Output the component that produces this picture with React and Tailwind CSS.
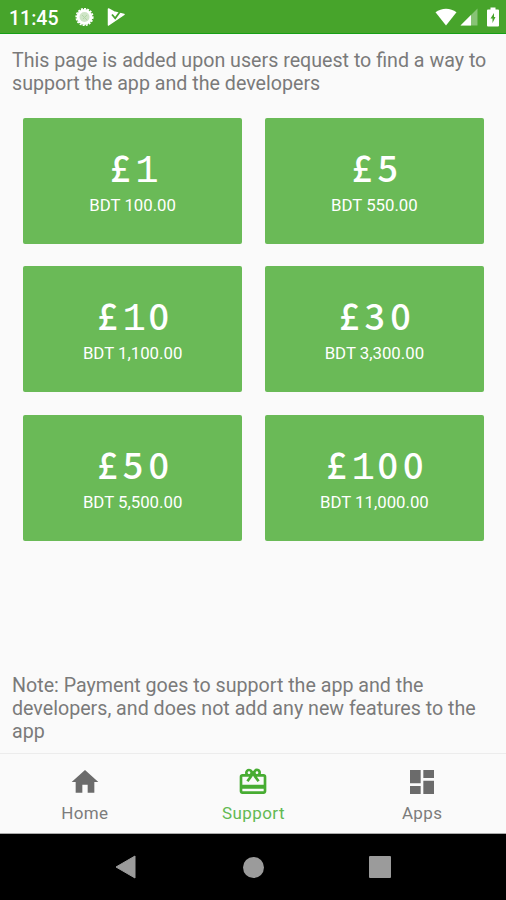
import { MdHome, MdRedeem, MdDashboard } from "react-icons/md";

const donations = [
  { amount: "£1", price: "BDT 100.00" },
  { amount: "£5", price: "BDT 550.00" },
  { amount: "£10", price: "BDT 1,100.00" },
  { amount: "£30", price: "BDT 3,300.00" },
  { amount: "£50", price: "BDT 5,500.00" },
  { amount: "£100", price: "BDT 11,000.00" },
];

const tabs = [
  { label: "Home", icon: MdHome },
  { label: "Support", icon: MdRedeem, active: true },
  { label: "Apps", icon: MdDashboard },
];

function StatusBar() {
  return (
    <header className="flex h-[34px] items-center border-b border-[#16a016] bg-[#47a42b] pl-[9px] pr-[7px] text-white">
      <span className="w-[66px] pt-[4px] text-[19.5px] font-medium leading-none">11:45</span>
      {/* Notification icons */}
      <svg className="mt-px h-5 w-5" viewBox="0 0 20 20">
        <circle cx="9.5" cy="10" r="8.3" fill="none" stroke="#fff" strokeWidth="1.6" strokeDasharray="2 1.2" />
        <circle cx="9.5" cy="10" r="7.9" fill="#fff" />
        <circle cx="9.5" cy="10" r="5" fill="#cfe5c7" />
        <path d="M7 8l5 5M8 12l4-4" stroke="#b3d6a7" strokeWidth="1" />
      </svg>
      <svg className="ml-3 mt-px h-5 w-[18px]" viewBox="0 0 18 20">
        <path d="M1.500 2L7 5L11 6L17 7.500L1.500 18Z" fill="#fff" stroke="#fff" strokeWidth="1.5" strokeLinejoin="round" />
        <path d="M5 7.500l3.200 3.800L13.500 4" fill="none" stroke="#47a42b" strokeWidth="1.8" />
      </svg>

      <div className="ml-auto mt-px flex items-center">
        <svg className="h-[18px] w-[22px]" viewBox="0 0 22 18">
          <path d="M11 17.5L.5 4.2C6.5-.5 15.500-.5 21.500 4.200Z" fill="#fff" />
        </svg>
        <svg className="ml-[3px] h-[18px] w-[18px]" viewBox="0 0 18 18">
          <path d="M17.500 .5v17H.5Z" fill="#fff" fillOpacity=".35" />
          <path d="M11 7v10.500H.5Z" fill="#fff" />
        </svg>
        <svg className="ml-[9px] h-5 w-3" viewBox="0 0 12 20">
          <path d="M3.500 .5h5v2H11q1 0 1 1V18.500q0 1-1 1H1q-1 0-1-1V3.500q0-1 1-1h2.500Z" fill="#fff" />
          <path d="M7 6L3.500 11.500H5.500V16L8.500 10H7Z" fill="#47a42b" />
        </svg>
      </div>
    </header>
  );
}

function Amount({ value }) {
  return (
    <span className="flex h-10 items-baseline pl-px leading-[40px]">
      {value.split("").map((char, i) => (
        <span
          key={i}
          className={
            char === "1"
              ? "w-[25.6px] pl-[2px] text-center font-['Liberation_Mono',monospace] text-[39px]"
              : "w-[25.6px] text-center font-['Noto_Sans_CJK_JP',sans-serif] text-[36px] font-medium"
          }
        >
          {char}
        </span>
      ))}
    </span>
  );
}

function DonationCard({ amount, price }) {
  return (
    <button className="flex h-[126px] flex-col items-center rounded-xs bg-[#6aba57] pt-[28px] text-white">
      <Amount value={amount} />
      <span className="mt-[9px] text-[16.800px] leading-5">{price}</span>
    </button>
  );
}

export default function App() {
  return (
    <div className="flex h-[900px] w-[506px] flex-col overflow-hidden bg-[#fafafa] font-[Roboto,sans-serif]">
      <StatusBar />

      <main className="flex flex-1 flex-col">
        <p className="px-3 pt-[15px] text-[19.650px] leading-[23px] text-[#7a7a7a]">
          This page is added upon users request to find a way to support the app and the developers
        </p>

        <div className="mt-[23px] grid grid-cols-2 gap-x-[22.5px] gap-y-[22.4px] pl-[23px] pr-[22px]">
          {donations.map((item) => (
            <DonationCard key={item.amount} {...item} />
          ))}
        </div>

        <p className="mt-auto px-3 pb-[10px] text-[19.650px] leading-[23px] text-[#7a7a7a]">
          Note: Payment goes to support the app and the developers, and does not add any new features to the app
        </p>
      </main>

      {/* Bottom navigation */}
      <nav className="grid h-[81px] grid-cols-3 border-b border-t border-b-[#aaa] border-t-[#ececec]">
        {tabs.map(({ label, icon: Icon, active }) => (
          <div
            key={label}
            className={`flex flex-col items-center pl-px pt-3 ${active ? "text-[#47ac32]" : "text-[#6b6b6b]"}`}
          >
            <Icon size={32} />
            <span className={`mt-[5px] text-[17px] leading-5 tracking-[0.4px] ${active ? "text-[#62b952]" : "text-[#7c7c7c]"}`}>
              {label}
            </span>
          </div>
        ))}
      </nav>

      {/* System buttons */}
      <div className="flex h-[66px] items-center justify-center gap-[105px] bg-black text-[#9b9b9b]">
        <svg className="h-6 w-[22px]" viewBox="0 0 22 24">
          <path d="M0 12L19 1V23Z" fill="currentColor" stroke="currentColor" strokeLinejoin="round" />
        </svg>
        <div className="h-[21px] w-[21px] rounded-full bg-[#9b9b9b]" />
        <div className="h-[22px] w-[22px] rounded-[1px] bg-[#9b9b9b]" />
      </div>
    </div>
  );
}
